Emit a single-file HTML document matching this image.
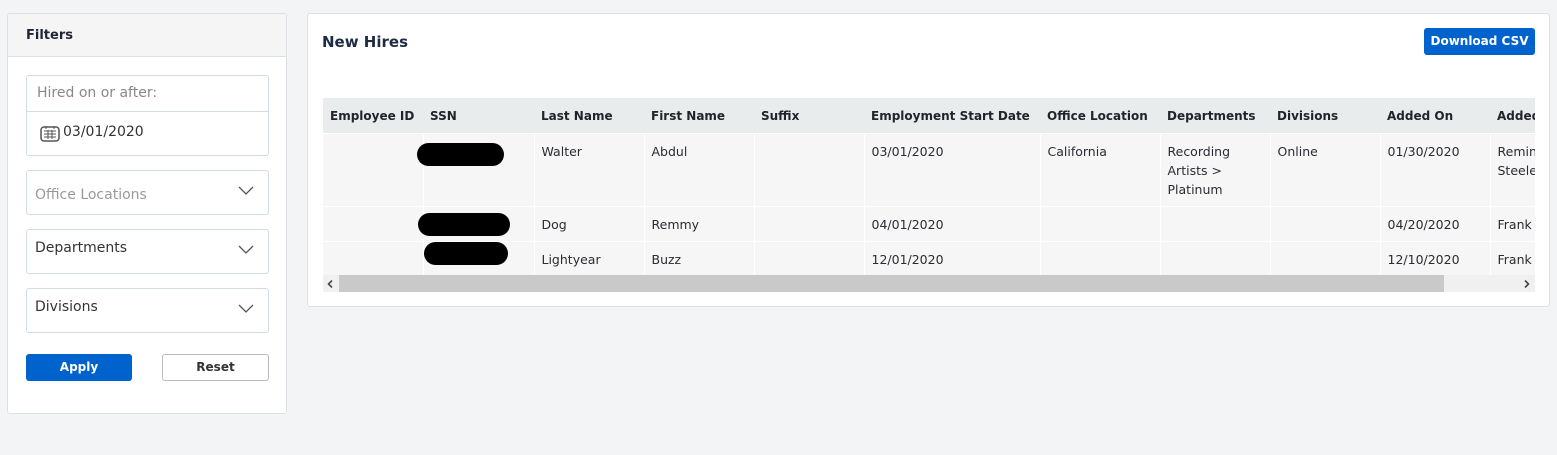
<!DOCTYPE html>
<html><head><meta charset="utf-8"><style>
*{box-sizing:border-box;margin:0;padding:0}
body{width:1557px;height:455px;background:#f3f4f6;font-family:"DejaVu Sans","Liberation Sans",sans-serif;color:#2b2b33;position:relative;overflow:hidden}
.card{position:absolute;background:#fff;border:1px solid #dde1e5;border-radius:3px}
.a{position:absolute}
.box{position:absolute;border:1px solid #cfdde6;border-radius:3px;background:#fff}
.chev{position:absolute;right:14px;top:15px}
table{border-collapse:collapse;font-size:12.5px;table-layout:fixed}
th{background:#e9eced;text-align:left;font-weight:bold;font-size:12px;height:35px;padding:1px 7px 0;white-space:nowrap;color:#23232b}
td{background:#f6f6f6;vertical-align:top;padding:8px 7px 0;border-left:1px solid #fff;border-top:1px solid #fff;line-height:19px;white-space:nowrap}
td:first-child{border-left:none}
.r{background:#000;border-radius:12px;height:23px;position:absolute}
</style></head><body>
<div class="card" style="left:7px;top:13px;width:280px;height:401px;overflow:hidden">
 <div class="a" style="left:0;top:0;width:280px;height:43px;background:#f5f5f5;border-bottom:1px solid #dde1e5"></div>
 <div class="a" style="left:18px;top:14px;font-size:13px;font-weight:bold;color:#1f2533">Filters</div>
</div>
<div class="box" style="left:26px;top:75px;width:243px;height:81px"></div>
<div class="a" style="left:27px;top:111px;width:241px;height:1px;background:#cfdde6"></div>
<div class="a" style="left:37px;top:85px;font-size:14px;color:#888">Hired on or after:</div>
<svg class="a" style="left:40px;top:125px" width="20" height="17" viewBox="0 0 20 17"><rect x="1" y="2" width="18" height="14" rx="3" fill="none" stroke="#555" stroke-width="1.5"/><path d="M4 6h12M4 9h12M4 12h12M8 5v9M12 5v9M6 1v3M14 1v3" stroke="#555" stroke-width="1"/></svg>
<div class="a" style="left:63px;top:124px;font-size:14px;color:#333">03/01/2020</div>
<div class="box" style="left:26px;top:170px;width:243px;height:45px"><span class="a" style="left:8px;top:16px;font-size:14px;color:#999">Office Locations</span><svg class="chev" width="16" height="10"><path d="M1 1l7 7 7-7" fill="none" stroke="#555" stroke-width="1.3"/></svg></div>
<div class="box" style="left:26px;top:229px;width:243px;height:45px"><span class="a" style="left:8px;top:10px;font-size:14px;color:#333">Departments</span><svg class="chev" width="16" height="10"><path d="M1 1l7 7 7-7" fill="none" stroke="#555" stroke-width="1.3"/></svg></div>
<div class="box" style="left:26px;top:288px;width:243px;height:45px"><span class="a" style="left:8px;top:10px;font-size:14px;color:#333">Divisions</span><svg class="chev" width="16" height="10"><path d="M1 1l7 7 7-7" fill="none" stroke="#555" stroke-width="1.3"/></svg></div>
<div class="a" style="left:26px;top:354px;width:106px;height:27px;background:#0062cc;border-radius:3px;color:#fff;font-size:12px;font-weight:bold;text-align:center;line-height:27px">Apply</div>
<div class="a" style="left:162px;top:354px;width:107px;height:27px;background:#fff;border:1px solid #bbb;border-radius:3px;color:#333;font-size:12px;font-weight:bold;text-align:center;line-height:25px">Reset</div>

<div class="card" style="left:307px;top:13px;width:1243px;height:294px"></div>
<div class="a" style="left:322px;top:33px;font-size:15px;font-weight:bold;color:#1f2a44">New Hires</div>
<div class="a" style="left:1424px;top:28px;width:111px;height:27px;background:#0062cc;border-radius:3px;color:#fff;font-size:12px;font-weight:bold;text-align:center;line-height:27px">Download CSV</div>

<div class="a" style="left:323px;top:98px;width:1212px;height:194px;overflow:hidden">
<table style="width:1290px">
<colgroup><col style="width:100px"><col style="width:111px"><col style="width:110px"><col style="width:110px"><col style="width:110px"><col style="width:176px"><col style="width:120px"><col style="width:110px"><col style="width:110px"><col style="width:110px"><col style="width:123px"></colgroup>
<tr><th>Employee ID</th><th>SSN</th><th>Last Name</th><th>First Name</th><th>Suffix</th><th>Employment Start Date</th><th>Office Location</th><th>Departments</th><th>Divisions</th><th>Added On</th><th>Added By</th></tr>
<tr style="height:73px"><td></td><td></td><td>Walter</td><td>Abdul</td><td></td><td>03/01/2020</td><td>California</td><td>Recording<br>Artists &gt;<br>Platinum</td><td>Online</td><td>01/30/2020</td><td>Reminton<br>Steele</td></tr>
<tr style="height:35px"><td></td><td></td><td>Dog</td><td>Remmy</td><td></td><td>04/01/2020</td><td></td><td></td><td></td><td>04/20/2020</td><td>Frank</td></tr>
<tr style="height:35px"><td></td><td></td><td>Lightyear</td><td>Buzz</td><td></td><td>12/01/2020</td><td></td><td></td><td></td><td>12/10/2020</td><td>Frank</td></tr>
</table>
<div class="a" style="left:0;top:177px;width:1212px;height:17px;background:#f0f0f0"></div>
<div class="a" style="left:16px;top:177px;width:1105px;height:17px;background:#c9c9c9"></div>
<svg class="a" style="left:4px;top:182px" width="6" height="8"><path d="M5 0.5L1.5 4 5 7.5" fill="none" stroke="#444" stroke-width="1.6"/></svg>
<svg class="a" style="left:1201px;top:182px" width="6" height="8"><path d="M1 0.5L4.5 4 1 7.5" fill="none" stroke="#444" stroke-width="1.6"/></svg>
</div>
<div class="r" style="left:417px;top:143px;width:87px"></div>
<div class="r" style="left:418px;top:213px;width:92px"></div>
<div class="r" style="left:424px;top:242px;width:84px"></div>
</body></html>
